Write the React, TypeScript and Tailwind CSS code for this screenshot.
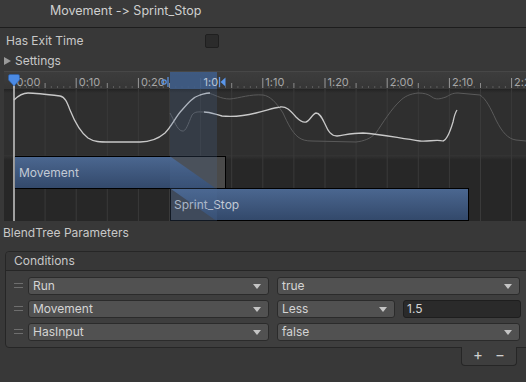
import React from "react";

const MAJOR = ["0:00", "0:10", "0:20", "1:0", "1:10", "1:20", "2:00", "2:10", "2:2"];
const STEP = 62.2;

function Arrow() {
  return (
    <svg className="absolute right-[7px] top-[6px]" width="8" height="5" viewBox="0 0 8 5">
      <path d="M0 0h8L4 5z" fill="#c4c4c4" />
    </svg>
  );
}

function Dropdown({ value, className }: { value: string; className: string }) {
  return (
    <div className={`relative flex h-[18px] items-center rounded-[3px] border border-[#2b2b2b] bg-[#515151] pl-[4px] text-[12px] text-[#d4d4d4] ${className}`}>
      {value}
      <Arrow />
    </div>
  );
}

function Handle() {
  return (
    <div className="flex w-[22px] flex-col items-center gap-[3px] pl-[2px]">
      <span className="h-px w-[9px] bg-[#6e6e6e]" />
      <span className="h-px w-[9px] bg-[#6e6e6e]" />
    </div>
  );
}

function Timeline() {
  const grid = Array.from({ length: 17 }, (_, i) => 14 + (STEP / 2) * i);
  const dots = Array.from({ length: 85 }, (_, i) => 14 + (STEP / 10) * i);
  return (
    <div className="relative ml-[4px] h-[150px] overflow-hidden bg-[#272727]">
      {/* background, grid, curves */}
      <svg className="absolute inset-0" width="522" height="150" viewBox="4 71 522 150">
        <defs>
          <linearGradient id="ruler" x1="0" y1="0" x2="0" y2="1">
            <stop offset="0" stopColor="#3d3d3d" />
            <stop offset="1" stopColor="#363636" />
          </linearGradient>
          <linearGradient id="shade" x1="0" y1="0" x2="0" y2="1">
            <stop offset="0" stopColor="#232323" />
            <stop offset="1" stopColor="#2f2f2f" />
          </linearGradient>
          <linearGradient id="shade2" x1="0" y1="0" x2="0" y2="1">
            <stop offset="0" stopColor="#343434" />
            <stop offset="1" stopColor="#272727" />
          </linearGradient>
        </defs>
        <rect x="4" y="71" width="522" height="18" fill="url(#ruler)" />
        <line x1="4" y1="71.5" x2="526" y2="71.5" stroke="#474747" />
        <rect x="4" y="89" width="522" height="4" fill="url(#shade)" />
        <rect x="4" y="93" width="522" height="62" fill="#2f2f2f" />
        <rect x="4" y="155" width="522" height="5" fill="url(#shade2)" />
        {grid.slice(1).map((x) => (
          <line key={x} x1={x} y1="89" x2={x} y2="221" stroke="#3a3a3a" strokeWidth="1" />
        ))}
        {dots.map((x, i) =>
          i % 10 === 0 ? (
            <line key={x} x1={x} y1="78" x2={x} y2="88" stroke="#9a9a9a" />
          ) : i % 5 === 0 ? (
            <line key={x} x1={x} y1="83" x2={x} y2="88" stroke="#8a8a8a" />
          ) : (
            <line key={x} x1={x} y1="86" x2={x} y2="88" stroke="#5e5e5e" />
          )
        )}
        {MAJOR.map((t, i) => (
          <text key={t} x={14 + STEP * i + 2.5} y="85.5" fontSize="11" fill="#a6a6a6" fontFamily="Inter, sans-serif">
            {t}
          </text>
        ))}
        {/* Movement curve faded continuation */}
        <path
          d="M208,93 C214,94 220,99 230,99 C240,98 250,94 263,95 C270,96 276,102 283,113 C288,124 292,132 298,137 C302,140 306,141 312,141 L356,142 C364,141 370,139 376,133 C382,124 392,108 400,101 C405,96 410,94 418,93 C424,93 428,94 432,97 C436,100 440,99 446,97 C450,95 452,93 458,93 L480,95 C486,99 490,107 496,120 C502,132 508,139 516,140 L526,141"
          fill="none"
          stroke="#5a5a5a"
          strokeWidth="1"
        />
        {/* Sprint curve faded start */}
        <path d="M170,113 C174,120 177,130 182,131 C186,132 188,124 192,115 C195,111 199,112 204,112" fill="none" stroke="#5e5e5e" strokeWidth="1" />
        {/* Movement curve */}
        <path
          d="M14,100 C18,96 22,93 28,93 C36,93 52,95 60,96 C65,97 67,102 70,110 C74,120 80,132 88,138 C94,142 100,142 110,142 L140,142 C150,142 158,139 165,133 C172,126 176,116 182,110 C188,103 193,97 200,95 C204,94 206,93 210,93"
          fill="none"
          stroke="#c9c9c9"
          strokeWidth="1.3"
        />
        {/* Sprint curve */}
        <path
          d="M204,112 C210,112 214,114 222,116 C232,117 244,116 256,113 C266,111 272,108 280,107 C286,106 290,110 296,117 C300,121 303,123 306,122 C310,121 312,114 316,113 C320,113 322,118 325,124 C328,131 331,136 337,136 C345,135 352,133 363,133 C380,134 398,138 420,141 C428,142 436,139 443,141 C447,140 450,132 453,122 C454,117 455,113 457,110"
          fill="none"
          stroke="#c9c9c9"
          strokeWidth="1.3"
        />
      </svg>

      {/* Movement bar */}
      <div className="absolute left-[10px] top-[85px] h-[33px] w-[212px] overflow-hidden border border-black bg-gradient-to-b from-[#4b6790] to-[#33496b]">
        <svg className="absolute inset-0" width="212" height="33" viewBox="0 0 212 33">
          <path d="M156,0 L212,0 L212,33 L203,33 Z" fill="#4a4a4a" />
        </svg>
        <span className="absolute left-[4px] top-[7px] text-[12px] text-[#c3cad5]">Movement</span>
      </div>

      {/* Sprint_Stop bar */}
      <div className="absolute left-[166px] top-[117px] h-[33px] w-[299px] overflow-hidden border border-black bg-gradient-to-b from-[#4b6790] to-[#33496b]">
        <svg className="absolute inset-0" width="299" height="33" viewBox="0 0 299 33">
          <path d="M0,0 L47,33 L0,33 Z" fill="#3c4049" />
        </svg>
        <span className="absolute left-[3px] top-[7px] text-[12px] text-[#c3cad5]">Sprint_Stop</span>
      </div>

      {/* transition highlight + markers */}
      <svg className="absolute inset-0" width="522" height="150" viewBox="4 71 522 150">
        <rect x="170" y="72" width="47" height="17" fill="#3f5d88" fillOpacity="0.9" />
        <rect x="170" y="89" width="47" height="132" fill="#4d6e9c" fillOpacity="0.22" />
        <text x="203.5" y="85.5" fontSize="11" fill="#b8c3d4" fontFamily="Inter, sans-serif">1:0</text>
        <line x1="14" y1="84" x2="14" y2="221" stroke="#c8c8c8" strokeWidth="1.5" />
        <path d="M8.5,76 Q8.5,74.5 10,74.5 L18,74.5 Q19.5,74.5 19.5,76 L19.5,80 L14,86 L8.5,80 Z" fill="#4b8ae4" stroke="#2a5ea8" strokeWidth="0.6" />
        <circle cx="164" cy="82" r="2.2" fill="none" stroke="#5a96ea" strokeWidth="1.2" />
        <line x1="168" y1="77" x2="168" y2="87" stroke="#5a96ea" strokeWidth="1.2" />
        <line x1="219.5" y1="77" x2="219.5" y2="87" stroke="#5a96ea" strokeWidth="1.3" />
        <path d="M220.5,82 L225.5,77.5 L225.5,86.5 Z" fill="#5a96ea" />
      </svg>
    </div>
  );
}

export default function App() {
  return (
    <div className="h-[382px] w-[526px] overflow-hidden bg-[#383838] font-[Inter,sans-serif] text-[12px] text-[#c8c8c8] [font-feature-settings:'calt'_0]">
      <div className="flex h-[28px] items-center border-b border-[#1d1d1d] bg-[#3a3a3a] pb-[4px] pl-[50px] text-[12.5px] text-[#cfcfcf]">
        Movement -&gt; Sprint_Stop
      </div>

      <div className="flex h-[22px] items-center pl-[6px] pt-[4px]">
        <span className="w-[199px]">Has Exit Time</span>
        <span className="h-[14px] w-[14px] rounded-[2px] border border-[#1f1f1f] bg-[#2b2b2b]" />
      </div>

      <div className="flex h-[21px] items-center gap-[4px] pl-[4px] pt-[1px]">
        <svg width="7" height="8" viewBox="0 0 7 8">
          <path d="M0 0L7 4L0 8z" fill="#9a9a9a" />
        </svg>
        <span>Settings</span>
      </div>

      <Timeline />

      <div className="flex h-[24px] items-center pl-[3px]">BlendTree Parameters</div>

      <div className="ml-[5px] mt-[6px] w-[530px] rounded-[4px] border border-[#262626] bg-[#3e3e3e]">
        <div className="flex h-[19px] items-center rounded-t-[4px] border-b border-[#262626] bg-[#373737] pl-[8px]">
          Conditions
        </div>
        <div className="flex flex-col pb-[4px] pt-[3px]">
          <div className="flex h-[23px] items-center">
            <Handle />
            <Dropdown value="Run" className="w-[241px]" />
            <Dropdown value="true" className="ml-[8px] w-[243px]" />
          </div>
          <div className="flex h-[23px] items-center">
            <Handle />
            <Dropdown value="Movement" className="w-[241px]" />
            <Dropdown value="Less" className="ml-[8px] w-[118px]" />
            <div className="ml-[8px] flex h-[18px] w-[118px] items-center rounded-[3px] border border-[#1e1e1e] bg-[#2a2a2a] pl-[3px] text-[12px] text-[#d4d4d4]">
              1.5
            </div>
          </div>
          <div className="flex h-[23px] items-center">
            <Handle />
            <Dropdown value="HasInput" className="w-[241px]" />
            <Dropdown value="false" className="ml-[8px] w-[243px]" />
          </div>
        </div>
      </div>
      <div className="ml-[461px] flex h-[19px] w-[56px] -translate-y-px items-center justify-center gap-[12px] rounded-b-[4px] border border-t-0 border-[#262626] bg-[#3e3e3e] pb-[2px] text-[15px] text-[#d0d0d0]">
        <span>+</span>
        <span>−</span>
      </div>
    </div>
  );
}
